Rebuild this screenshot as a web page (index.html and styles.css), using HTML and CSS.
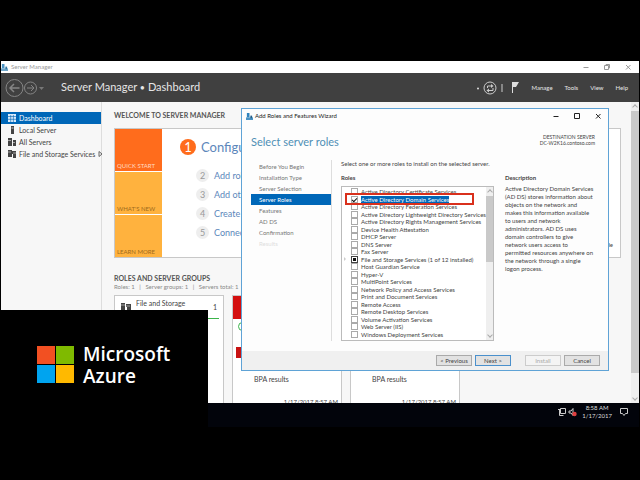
FILE: index.html
```
<!DOCTYPE html>
<html lang="en">
<head>
  <meta charset="UTF-8">
  <meta name="viewport" content="width=device-width, initial-scale=1.0">
  <title>Server Manager</title>
  <link rel="stylesheet" href="styles.css">
</head>
<body>
  <div class="window">
    <header class="titlebar">
      <svg class="app-icon" viewBox="0 0 8 8"><path d="M1 0h3v5H1z" fill="#4a93c4"/><path d="M0 5h8v3H0z" fill="#6ea5c8"/><path d="M5 3h2v3H5z" fill="#31759f"/></svg>
      <span class="titlebar-name">Server Manager</span>
      <button class="win-btn" aria-label="Minimize"><svg viewBox="0 0 8 8"><path d="M1.500 4.500h5"/></svg></button>
      <button class="win-btn" aria-label="Restore"><svg viewBox="0 0 8 8"><path d="M1.500 2.500h4v4h-4zM3 2.500v-1h3.500V5h-1"/></svg></button>
      <button class="win-btn" aria-label="Close"><svg viewBox="0 0 8 8"><path d="M2 2l4.500 4.500M6.500 2L2 6.500"/></svg></button>
    </header>

    <div class="toolbar">
      <svg class="history" viewBox="0 0 42 20">
        <g fill="none" stroke="#858585">
          <circle cx="9.500" cy="10" r="8.500"/>
          <path d="M14.500 10H5M9 6l-4 4 4 4" stroke-width="1.500"/>
          <circle cx="25.500" cy="10" r="6"/>
          <path d="M22 10h7M26 7l3 3-3 3"/>
        </g>
        <path d="M34 9h5l-2.500 3z" fill="#777"/>
      </svg>
      <h1 class="crumbs">Server Manager <span>&bull;</span> Dashboard</h1>
      <svg class="status" viewBox="0 0 46 18">
        <circle cx="2" cy="9.500" r="1" fill="#ddd"/>
        <g fill="none" stroke="#ccc">
          <circle cx="14" cy="9" r="6"/>
          <path d="M11.500 9V7h4.500M17 9v2.500h-5M26 5v8"/>
        </g>
        <path d="M15 5l2.500 2L15 9zM13 9.500l-2.500 2 2.500 2z" fill="#ccc"/>
        <path d="M36 3h7l-3 5h-3v6h-1z" fill="#ddd"/>
      </svg>
      <nav class="menu">
        <a href="#">Manage</a>
        <a href="#">Tools</a>
        <a href="#">View</a>
        <a href="#">Help</a>
      </nav>
    </div>

    <div class="content">
      <nav class="sidebar">
        <a class="side-link side-link--active" href="#"><svg viewBox="0 0 8 8"><path d="M0 0h8v8H0z" fill="#d8eafa"/><path d="M0 2.500h8M0 5.300h8M2.700 1v7M5.400 1v7" stroke="#0063b1" stroke-width=".6"/></svg>Dashboard</a>
        <a class="side-link" href="#"><svg viewBox="0 0 8 8"><path d="M3 0h3v8H3z" fill="#444"/><path d="M3.500 2h2" stroke="#ccc"/></svg>Local Server</a>
        <a class="side-link" href="#"><svg viewBox="0 0 8 8"><path d="M0 0h4v8H0zM5 2h3v6H5z" fill="#444"/><path d="M0 2.500h3M5 4.500h2" stroke="#ccc" stroke-width=".7"/></svg>All Servers</a>
        <a class="side-link" href="#"><svg viewBox="0 0 8 8"><path d="M0 0h4v7H0zM4 1h4v7H5V4H4z" fill="#444"/><path d="M0 2h3M5 3h3" stroke="#ccc" stroke-width=".7"/></svg>File and Storage Services<svg class="side-arrow" viewBox="0 0 8 8"><path d="M1 1.500L4 4 1 6.500z" fill="none" stroke="#666"/></svg></a>
      </nav>

      <main class="main">
        <h2>WELCOME TO SERVER MANAGER</h2>
        <section class="welcome">
          <div class="welcome-tabs">
            <a class="tab tab--current" href="#">QUICK START</a>
            <a class="tab" href="#">WHAT'S NEW</a>
            <a class="tab" href="#">LEARN MORE</a>
          </div>
          <div class="steps">
            <a class="step step--first" href="#"><b>1</b>Configure</a>
            <a class="step" href="#"><b>2</b>Add roles</a>
            <a class="step" href="#"><b>3</b>Add other</a>
            <a class="step" href="#"><b>4</b>Create a</a>
            <a class="step" href="#"><b>5</b>Connect</a>
          </div>
          <a class="hide-link" href="#">Hide</a>
        </section>

        <h2 class="groups-title">ROLES AND SERVER GROUPS</h2>
        <p class="groups-info">Roles: 1 &nbsp; | &nbsp; Server groups: 1 &nbsp; | &nbsp; Servers total: 1</p>
        <div class="tiles">
          <section class="tile">
            <div class="tile-head">
              <svg viewBox="0 0 10 10"><path d="M0 1h4v7H0zM5 2h5v7H6V5H5z" fill="#444"/><path d="M0 3h4M5 4h4" stroke="#ccc" stroke-width=".7"/></svg>
              <h3>File and Storage</h3>
              <span>1</span>
            </div>
          </section>
          <section class="tile tile--alert">
            <div class="tile-head"></div>
            <p class="health"></p>
            <p class="flag"></p>
            <p class="bpa">BPA results</p>
            <time>1/17/2017 8:57 AM</time>
          </section>
          <section class="tile tile--alert">
            <div class="tile-head"></div>
            <p class="health"></p>
            <p class="flag"></p>
            <p class="bpa">BPA results</p>
            <time>1/17/2017 8:57 AM</time>
          </section>
        </div>
      </main>

      <div class="scrollbar page-scroll"><i></i></div>
    </div>

    <div class="dialog" role="dialog" aria-labelledby="wizard-name">
      <header class="dialog-title">
        <svg class="app-icon" viewBox="0 0 8 8"><path d="M1 0h3v5H1z" fill="#2f83bd"/><path d="M0 5h8v3H0z" fill="#4a93c4"/><path d="M5 3h2v3H5z" fill="#245f88"/></svg>
        <span id="wizard-name">Add Roles and Features Wizard</span>
        <button class="win-btn" aria-label="Minimize"><svg viewBox="0 0 8 8"><path d="M1.500 4.500h5"/></svg></button>
        <button class="win-btn" aria-label="Maximize"><svg viewBox="0 0 8 8"><path d="M1.500 1.500h5v5h-5z"/></svg></button>
        <button class="win-btn" aria-label="Close"><svg viewBox="0 0 8 8"><path d="M2 2l4.500 4.500M6.500 2L2 6.500"/></svg></button>
      </header>
      <div class="dialog-head">
        <h2>Select server roles</h2>
        <p>DESTINATION SERVER<br>DC-W2K16.contoso.com</p>
      </div>
      <div class="dialog-body">
        <nav class="wizard-nav">
          <a href="#">Before You Begin</a>
          <a href="#">Installation Type</a>
          <a href="#">Server Selection</a>
          <a class="current" href="#">Server Roles</a>
          <a href="#">Features</a>
          <a href="#">AD DS</a>
          <a href="#">Confirmation</a>
          <a class="disabled" href="#">Results</a>
        </nav>
        <section class="roles">
          <p>Select one or more roles to install on the selected server.</p>
          <h3>Roles</h3>
          <div class="role-box">
            <div class="role-list">
              <label><input type="checkbox"><span>Active Directory Certificate Services</span></label>
              <label class="selected"><input type="checkbox" checked><span>Active Directory Domain Services</span></label>
              <label><input type="checkbox"><span>Active Directory Federation Services</span></label>
              <label><input type="checkbox"><span>Active Directory Lightweight Directory Services</span></label>
              <label><input type="checkbox"><span>Active Directory Rights Management Services</span></label>
              <label><input type="checkbox"><span>Device Health Attestation</span></label>
              <label><input type="checkbox"><span>DHCP Server</span></label>
              <label><input type="checkbox"><span>DNS Server</span></label>
              <label><input type="checkbox"><span>Fax Server</span></label>
              <label class="expandable"><input class="partial" type="checkbox"><span>File and Storage Services (1 of 12 installed)</span></label>
              <label><input type="checkbox"><span>Host Guardian Service</span></label>
              <label><input type="checkbox"><span>Hyper-V</span></label>
              <label><input type="checkbox"><span>MultiPoint Services</span></label>
              <label><input type="checkbox"><span>Network Policy and Access Services</span></label>
              <label><input type="checkbox"><span>Print and Document Services</span></label>
              <label><input type="checkbox"><span>Remote Access</span></label>
              <label><input type="checkbox"><span>Remote Desktop Services</span></label>
              <label><input type="checkbox"><span>Volume Activation Services</span></label>
              <label><input type="checkbox"><span>Web Server (IIS)</span></label>
              <label><input type="checkbox"><span>Windows Deployment Services</span></label>
            </div>
            <div class="scrollbar list-scroll"><i></i></div>
            <div class="highlight"></div>
          </div>
        </section>
        <section class="description">
          <h3>Description</h3>
          <p>Active Directory Domain Services (AD DS) stores information about objects on the network and makes this information available to users and network administrators. AD DS uses domain controllers to give network users access to permitted resources anywhere on the network through a single logon process.</p>
        </section>
      </div>
      <footer class="dialog-foot">
        <button>&lt; Previous</button>
        <button class="default">Next &gt;</button>
        <button class="install" disabled>Install</button>
        <button>Cancel</button>
      </footer>
    </div>
  </div>

  <footer class="taskbar">
    <svg class="tray" viewBox="0 0 20 10">
      <g fill="none" stroke="#ccc">
        <path d="M2.500 1.500h5v5h-5zM0 2.500h2M1.500 3v5.500h4"/>
        <path d="M11 4h2l2-2.500v7L13 6h-2z"/>
      </g>
      <circle cx="16.500" cy="7" r="2.200" fill="#e04040"/>
    </svg>
    <time>8:58 AM<br>1/17/2017</time>
    <svg class="notes" viewBox="0 0 10 10"><path d="M1.500 1.500h7v5h-2l-1.500 2-1.500-2h-2z" fill="none" stroke="#ccc"/></svg>
  </footer>

  <div class="brand">
    <svg viewBox="0 0 37 37">
      <path d="M0 0h18v18H0z" fill="#f25022"/>
      <path d="M19 0h18v18H19z" fill="#7fba00"/>
      <path d="M0 19h18v18H0z" fill="#00a4ef"/>
      <path d="M19 19h18v18H19z" fill="#ffb900"/>
    </svg>
    <p>Microsoft<br>Azure</p>
  </div>
</body>
</html>
```

FILE: styles.css
```
:root {
  --blue: #0067b8;
  --link: #5c87bb;
  --page: #f7f7f7;
  --line: #c8c8c8;
  --text: #444;
}
* {
  box-sizing: border-box;
  margin: 0;
  padding: 0;
}
body {
  display: flex;
  flex-direction: column;
  height: 100vh;
  padding: 61px 1px 53px;
  background-color: #000;
  color: var(--text);
  font-family: Lato, "Open Sans", sans-serif;
  font-size: 6px;
  line-height: 8px;
  overflow: hidden;
  position: relative;
}
a {
  color: inherit;
  text-decoration: none;
}
button {
  font: inherit;
  color: inherit;
}
svg {
  flex: none;
}

/* Server Manager window */

.window {
  flex: 1;
  min-height: 0;
  display: flex;
  flex-direction: column;
  background-color: var(--page);
  position: relative;
}
.titlebar {
  display: flex;
  align-items: center;
  height: 12px;
  padding-right: 7px;
  background-color: #fff;
  color: #999;
}
.app-icon {
  width: 7px;
  height: 7px;
}
.titlebar-name {
  flex: 1;
  padding-left: 3px;
}
.win-btn {
  display: flex;
  margin-left: 13px;
  border: 0;
  background: none;
}
.win-btn svg {
  width: 8px;
  height: 8px;
  fill: none;
  stroke: currentColor;
}
.toolbar {
  display: flex;
  align-items: center;
  height: 29px;
  padding: 0 11px 0 4px;
  background-color: #404040;
  color: #e6e6e6;
}
.history {
  width: 42px;
  height: 20px;
}
.crumbs {
  flex: 1;
  padding-left: 14px;
  font-size: 11px;
  font-weight: 400;
  line-height: 16px;
}
.crumbs span {
  font-size: 9px;
}
.status {
  width: 46px;
  height: 18px;
}
.menu {
  display: flex;
  gap: 12px;
  padding-left: 10px;
}
.content {
  flex: 1;
  min-height: 0;
  display: flex;
}
.sidebar {
  width: 101px;
  padding-top: 10px;
  border-right: 1px solid #ddd;
  font-size: 7px;
}
.side-link {
  display: flex;
  align-items: center;
  gap: 3px;
  height: 12px;
  padding-left: 7px;
  white-space: nowrap;
}
.side-link svg {
  width: 8px;
  height: 8px;
}
.side-link--active {
  background-color: var(--blue);
  color: #fff;
}
.main {
  flex: 1;
  min-width: 0;
  padding: 8px 10px 0 12px;
  overflow: hidden;
}
.main h2 {
  font-size: 7px;
  line-height: 10px;
  color: #555;
}
.welcome {
  display: flex;
  margin-top: 8px;
  border: 1px solid var(--line);
  background-color: #fff;
}
.welcome-tabs {
  display: grid;
  gap: 1px;
  width: 47px;
}
.tab {
  display: flex;
  align-items: flex-end;
  height: 42px;
  padding: 0 2px 1px;
  background-color: #ffb23e;
  color: #a06a1c;
  white-space: nowrap;
}
.tab--current {
  background-color: #ff6c1c;
  color: #ffd9c0;
}
.steps {
  flex: 1;
  padding: 9px 0 0 33px;
  color: var(--link);
}
.step {
  display: flex;
  align-items: center;
  gap: 5px;
  height: 19px;
  font-size: 9px;
}
.step b {
  width: 13px;
  margin-left: 1px;
  border-radius: 50%;
  background-color: #eee;
  color: #999;
  font-weight: 400;
  line-height: 13px;
  text-align: center;
}
.step--first {
  height: 18px;
  margin-bottom: 10px;
  margin-left: -16px;
  font-size: 13px;
}
.step--first b {
  width: 16px;
  background-color: #ff6c1c;
  color: #fff;
  line-height: 16px;
}
.hide-link {
  align-self: flex-end;
  padding: 0 7px 8px 0;
}
.main .groups-title {
  margin-top: 15px;
}
.groups-info {
  color: #888;
}
.tiles {
  display: flex;
  gap: 8px;
  margin-top: 4px;
}
.tile {
  width: 110px;
  height: 130px;
  border: 1px solid var(--line);
  background-color: #fff;
}
.tile-head {
  display: flex;
  height: 23px;
  margin: 0 4px;
  padding: 3px 2px 0;
  gap: 5px;
  border-bottom: 1px solid #3bb44a;
}
.tile-head svg {
  width: 10px;
  height: 10px;
  margin-top: 3px;
}
.tile-head h3 {
  flex: 1;
  font-size: 7px;
  font-weight: 400;
  line-height: 8px;
}
.tile-head span {
  padding-top: 4px;
  font-size: 7px;
}
.tile--alert .tile-head {
  margin: 0;
  border: 0;
  background-color: #d40f0f;
}
.health {
  width: 9px;
  height: 9px;
  margin: 3px 0 0 5px;
  border: 1px solid #3bb44a;
  border-radius: 50%;
}
.flag {
  width: 14px;
  height: 11px;
  margin: 16px 0 0 3px;
  background-color: #c81212;
}
.bpa {
  margin: 17px 0 0 21px;
  font-size: 7px;
}
.tile time {
  display: block;
  margin-top: 15px;
  padding-right: 3px;
  text-align: right;
}

/* Scrollbars */

.scrollbar {
  display: flex;
  flex-direction: column;
  align-items: center;
  justify-content: space-between;
  width: 8px;
  background-color: #efefef;
}
.scrollbar::before,
.scrollbar::after {
  content: "";
  width: 3px;
  height: 3px;
  margin: 3px 0 2px;
  border: solid #aaa;
  border-width: 1px 0 0 1px;
  transform: rotate(45deg);
}
.scrollbar::after {
  margin: 2px 0 3px;
  transform: rotate(225deg);
}
.scrollbar i {
  width: 100%;
  background-color: #c9c9c9;
}
.page-scroll i {
  height: 262px;
  margin-bottom: auto;
}
.list-scroll i {
  height: 66px;
  margin-bottom: auto;
}

/* Wizard dialog */

.dialog {
  position: absolute;
  top: 47px;
  left: 240px;
  right: 30px;
  border: 1px solid #5fa3d6;
  background-color: #fdfdfd;
}
.dialog-title {
  display: flex;
  align-items: center;
  height: 14px;
  padding: 0 6px 0 4px;
  color: #222;
}
.dialog-title span {
  flex: 1;
  padding-left: 2px;
}
.dialog-head {
  display: flex;
  justify-content: space-between;
  padding: 11px 13px 0 9px;
}
.dialog-head h2 {
  color: #4f8fb5;
  font-size: 11px;
  font-weight: 400;
  line-height: 16px;
}
.dialog-head p {
  font-size: 5px;
  line-height: 6px;
  text-align: right;
}
.dialog-body {
  display: flex;
  padding: 10px 13px 10px 9px;
}
.wizard-nav {
  width: 81px;
  padding-top: 1px;
  border-right: 1px solid #ddd;
}
.wizard-nav a {
  display: block;
  padding-left: 8px;
  line-height: 11px;
  color: #777;
}
.wizard-nav .current {
  background-color: var(--blue);
  color: #fff;
}
.wizard-nav .disabled {
  color: #ddd;
}
.roles {
  width: 153px;
  margin-left: 9px;
}
.roles p {
  white-space: nowrap;
}
.dialog-body h3 {
  margin-top: 6px;
  font-size: 6px;
}
.role-box {
  display: flex;
  margin-top: 4px;
  border: 1px solid #bbb;
  background-color: #fff;
  position: relative;
}
.role-list {
  flex: 1;
  min-width: 0;
  display: grid;
  grid-template-rows: repeat(20, 1fr);
  height: 153px;
  padding: 1px 0 2px 9px;
}
.role-list label {
  display: flex;
  align-items: center;
  gap: 3px;
  min-height: 0;
  line-height: 7px;
  white-space: nowrap;
  position: relative;
}
.role-list input {
  appearance: none;
  width: 7px;
  height: 7px;
  border: 1px solid #aaa;
  background-color: #fff;
}
.role-list input:checked::after {
  content: "";
  display: block;
  width: 4px;
  height: 2px;
  margin: 1px auto;
  border: solid #111;
  border-width: 0 0 1px 1px;
  transform: rotate(-45deg);
}
.role-list .partial {
  border-color: #444;
  background-color: #111;
  box-shadow: inset 0 0 0 1px #fff;
}
.role-list .expandable::before {
  content: "";
  position: absolute;
  left: -7px;
  border: 2px solid transparent;
  border-left-color: #ccc;
}
.selected span {
  background-color: var(--blue);
  color: #fff;
}
.list-scroll {
  width: 7px;
}
.highlight {
  position: absolute;
  top: 6px;
  left: 3px;
  width: 129px;
  height: 12px;
  border: 2px solid #d9301c;
}
.description {
  flex: 1;
  margin-left: 11px;
  padding-top: 8px;
}
.description p {
  margin-top: 3px;
}
.dialog-foot {
  display: flex;
  justify-content: flex-end;
  gap: 3px;
  padding: 4px 8px;
  background-color: #f0f0f0;
}
.dialog-foot button {
  width: 36px;
  height: 11px;
  border: 1px solid #aaa;
  background-color: #e2e2e2;
}
.dialog-foot .default {
  border-color: #4a90cc;
}
.dialog-foot .install {
  margin-left: 11px;
  border-color: #ccc;
  background-color: #f4f4f4;
  color: #aaa;
}

/* Taskbar */

.taskbar {
  display: flex;
  justify-content: flex-end;
  align-items: center;
  height: 24px;
  padding: 0 10px 6px;
  background-color: #02040b;
  color: #ddd;
}
.tray {
  width: 20px;
  height: 10px;
}
.taskbar time {
  margin: 0 7px 0 4px;
  text-align: center;
}
.notes {
  width: 10px;
  height: 10px;
}

/* Video badge */

.brand {
  position: absolute;
  left: 0;
  bottom: 0;
  display: flex;
  gap: 9px;
  width: 208px;
  height: 170px;
  padding: 36px 0 0 37px;
  background-color: #000;
  color: #fff;
  font-family: "Open Sans", "Noto Sans", sans-serif;
  font-size: 19px;
  font-weight: 600;
  line-height: 22px;
}
.brand svg {
  width: 37px;
  height: 37px;
}
.brand p {
  margin-top: -3px;
}
```
